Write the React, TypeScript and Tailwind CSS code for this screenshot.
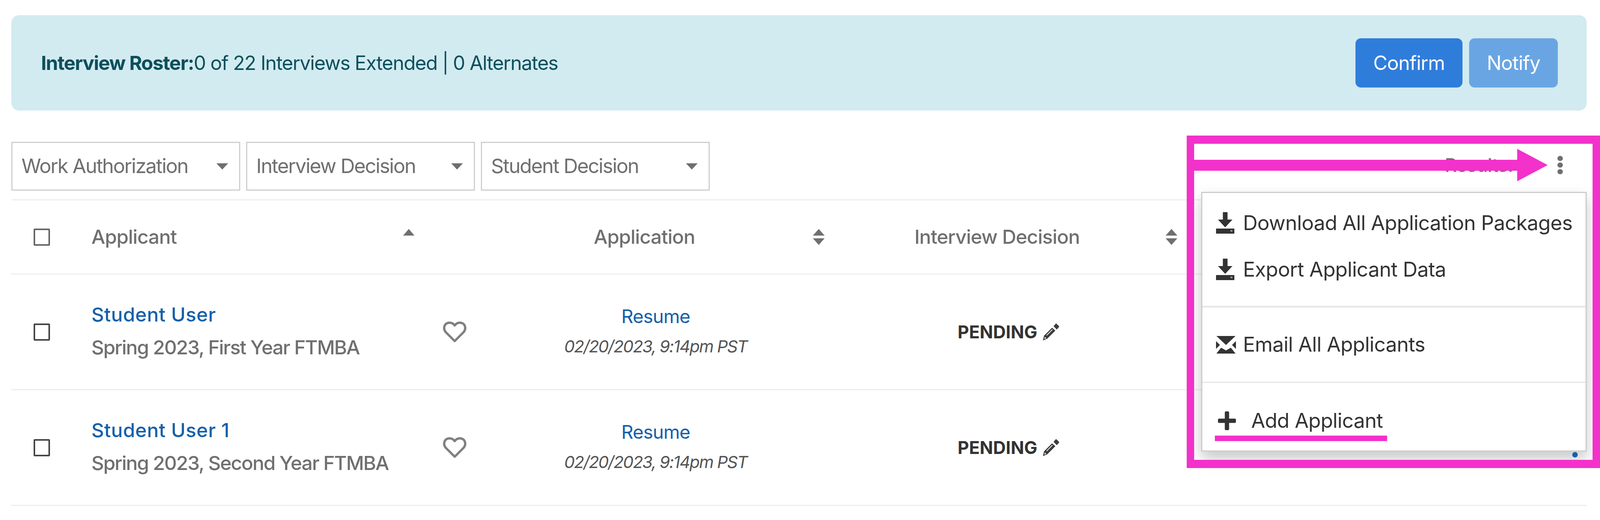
import React from 'react';

// The browser window opens 4096px wide, not 4400px, so horizontal sizes here are
// the reference's x 0.931 to keep the whole menu and annotation on screen.

const DownloadIcon = () => (
  <svg width="47" height="55" viewBox="0 0 47 55" className="shrink-0">
    <rect x="17.500" y="0" width="12" height="20" rx="1" fill="#333" />
    <polygon points="5,19 42,19 23.500,39" fill="#333" />
    <rect x="0" y="42" width="47" height="13" rx="1" fill="#333" />
    <rect x="37" y="46" width="5" height="4" fill="#999" />
  </svg>
);

const MailIcon = () => (
  <svg width="51" height="45" viewBox="0 0 51 45" className="shrink-0">
    <polygon points="1,0 50,0 25.500,23" fill="#333" />
    <polygon points="0,13 0,33 10,23" fill="#333" />
    <polygon points="51,13 51,33 41,23" fill="#333" />
    <polygon points="1,45 50,45 38,30 25.500,37 13,30" fill="#333" />
  </svg>
);

const PlusIcon = () => (
  <svg width="46" height="48" viewBox="0 0 46 48" className="shrink-0">
    <rect x="17.500" y="0" width="11" height="48" rx="3" fill="#333" />
    <rect x="0" y="18.500" width="46" height="11" rx="3" fill="#333" />
  </svg>
);

const PencilIcon = () => (
  <svg width="43" height="47" viewBox="0 0 46 47" className="shrink-0">
    <path d="M30 8 L36 1 Q37 0 38 1 L45 8 Q46 9 45 10 L39 17 Z" fill="#3c3c3c" />
    <path d="M26 12 L35 20 L13 42 L1 47 L4 34 Z" fill="#3c3c3c" />
    <path d="M11 33 L27 17" stroke="#fff" strokeWidth="2" />
    <path d="M6 37 L10 41 L5 43 Z" fill="#fff" />
  </svg>
);

const HeartIcon = () => (
  <svg width="60" height="55" viewBox="0 0 60 55" className="shrink-0">
    <path
      d="M30 51 L7 28 C1 21 2 11 9 6 C16 2 25 4 30 11 C35 4 44 2 51 6 C58 11 59 21 53 28 Z"
      fill="none"
      stroke="#808080"
      strokeWidth="6"
      strokeLinejoin="round"
    />
  </svg>
);

const SortIcon = () => (
  <svg width="30" height="41" viewBox="0 0 30 41" className="shrink-0">
    <polygon points="15,0 30,17 0,17" fill="#6f6f6f" />
    <polygon points="0,24 30,24 15,41" fill="#6f6f6f" />
  </svg>
);

const Filter = ({ label }: { label: string }) => (
  <div className="w-[586px] h-[125px] border-[3px] border-[#cfcfcf] pl-[23px] pr-[28px] flex items-center justify-between text-[#6f6f6f] text-[51px] tracking-[-2px]">
    <span>{label}</span>
    <svg width="30" height="16" viewBox="0 0 30 16"><polygon points="0,0 30,0 15,16" fill="#6f6f6f" /></svg>
  </div>
);

const Row = ({ name, sub }: { name: string; sub: string }) => (
  <div className="grid grid-cols-[176px_1022px_903px_903px_1fr] h-[296px] border-b-[3px] border-[#eeeeee]">
    <div className="flex items-center pl-[57px]">
      <div className="w-[42px] h-[44px] border-[4px] border-[#444] rounded-[3px]" />
    </div>
    <div className="flex items-center justify-between pl-[29px] pr-[33px]">
      <div className="pb-[6px]">
        <div className="text-[#1460aa] text-[50px] font-medium leading-[68px] tracking-[0.500px]">{name}</div>
        <div className="text-[#6f6f6f] text-[50px] font-medium leading-[68px] mt-[16px] tracking-[-1.800px]">{sub}</div>
      </div>
      <HeartIcon />
    </div>
    <div className="flex flex-col items-center justify-center pb-[4px]">
      <div className="text-[#1460aa] text-[48px] leading-[60px] tracking-[-1px]">Resume</div>
      <div className="text-[#555] text-[43px] italic leading-[60px] mt-[16px] tracking-[-1.900px]">02/20/2023, 9:14pm PST</div>
    </div>
    <div className="flex items-center justify-center gap-[13px]">
      <span className="text-[#333] text-[45px] font-bold">PENDING</span>
      <PencilIcon />
    </div>
    <div />
  </div>
);

export default function App() {
  return (
    <div className="relative h-[1331px] bg-white pl-[29px] pr-[34px] pt-[39px] overflow-hidden font-['Inter',sans-serif]">
      {/* Roster banner */}
      <div className="h-[244px] bg-[#d2ebf0] rounded-[20px] flex items-center justify-between pl-[76px] pr-[74px]">
        <div className="text-[#0c4f5c] text-[50px] tracking-[-1.500px]">
          <span className="font-bold">Interview Roster:</span>0 of 22 Interviews Extended | 0 Alternates
        </div>
        <div className="flex gap-[17px]">
          <button className="w-[274px] h-[126px] rounded-[14px] bg-[#2f7ddb] text-white text-[50px] tracking-[-1px]">Confirm</button>
          <button className="w-[227px] h-[126px] rounded-[14px] bg-[#6aa5e3] text-white text-[50px] tracking-[-1px]">Notify</button>
        </div>
      </div>

      {/* Filters */}
      <div className="mt-[80px] flex items-center justify-between">
        <div className="flex gap-[15px]">
          <Filter label="Work Authorization" />
          <Filter label="Interview Decision" />
          <Filter label="Student Decision" />
        </div>
        <div className="flex items-center gap-[114px] pr-[61px] -mt-[6px]">
          <span className="text-[#6f6f6f] text-[48px] font-medium tracking-[-1px]">Results:</span>
          <div className="flex flex-col gap-[4px]">
            <div className="w-[14px] h-[13px] rounded-full bg-[#6f6f6f]" />
            <div className="w-[14px] h-[13px] rounded-full bg-[#6f6f6f]" />
            <div className="w-[14px] h-[13px] rounded-full bg-[#6f6f6f]" />
          </div>
        </div>
      </div>

      {/* Table */}
      <div className="mt-[22px] border-t-[3px] border-[#eeeeee]">
        <div className="grid grid-cols-[176px_1022px_903px_903px_1fr] h-[190px] border-b-[3px] border-[#eeeeee] text-[#6f6f6f] text-[50px] font-medium tracking-[-1px]">
          <div className="flex items-center pl-[57px]">
            <div className="w-[42px] h-[44px] border-[4px] border-[#666] rounded-[3px]" />
          </div>
          <div className="flex items-center justify-between pl-[29px] pr-[166px]">
            <span>Applicant</span>
            <svg width="29" height="17" viewBox="0 0 29 17" className="-mt-[24px]"><polygon points="14.500,0 29,17 0,17" fill="#6f6f6f" /></svg>
          </div>
          <div className="flex items-center justify-between pl-[293px] pr-[19px]">
            <span>Application</span>
            <SortIcon />
          </div>
          <div className="flex items-center justify-between pl-[211px] pr-[19px]">
            <span>Interview Decision</span>
            <SortIcon />
          </div>
          <div />
        </div>
        <Row name="Student User" sub="Spring 2023, First Year FTMBA" />
        <Row name="Student User 1" sub="Spring 2023, Second Year FTMBA" />
      </div>

      {/* Actions menu */}
      <div className="absolute left-[3075px] top-[491px] w-[987px] h-[665px] bg-white border-[3px] border-[#cccccc] shadow-[0_18px_36px_rgba(0,0,0,0.22)] text-[#333] text-[52px] tracking-[-0.700px]">
        <div className="h-[293px] border-b-[4px] border-[#e6e6e6] pl-[35px] pt-[49px] flex flex-col gap-[64px]">
          <div className="flex items-center gap-[22px] h-[55px]"><DownloadIcon /><span>Download All Application Packages</span></div>
          <div className="flex items-center gap-[22px] h-[55px]"><DownloadIcon /><span>Export Applicant Data</span></div>
        </div>
        <div className="h-[193px] border-b-[3px] border-[#e6e6e6] pl-[35px] flex items-center gap-[18px]">
          <MailIcon /><span>Email All Applicants</span>
        </div>
        <div className="pl-[40px] pt-[58px] flex items-center gap-[39px]">
          <PlusIcon /><span>Add Applicant</span>
        </div>
      </div>
      <div className="absolute left-[4025px] top-[1157px] w-[14px] h-[14px] rounded-full bg-[#1460aa]" />

      {/* Annotation */}
      <div className="absolute left-[3038px] top-[347px] w-[1058px] h-[851px] border-y-[21px] border-x-[19px] border-[#f331cb]" />
      <div className="absolute left-[3056px] top-[409px] w-[828px] h-[28px] bg-[#f331cb]" />
      <svg className="absolute left-[3884px] top-[381px]" width="78" height="83" viewBox="0 0 78 83">
        <polygon points="0,0 78,41.500 0,83" fill="#f331cb" />
      </svg>
      <div className="absolute left-[3110px] top-[1115px] w-[441px] h-[14px] bg-[#f331cb]" />
    </div>
  );
}
